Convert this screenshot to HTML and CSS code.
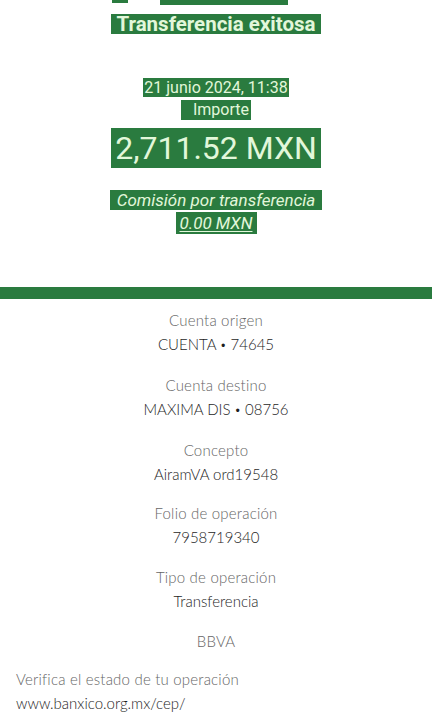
FILE: index.html
```html
<!DOCTYPE html>
<html lang="es">
<head>
<meta charset="utf-8">
<link rel="stylesheet" href="styles.css">
</head>
<body>
<div class="hero">
  <div class="stub"><span class="stub-a"></span><span class="stub-b"></span></div>
  <div class="row r-title"><span class="hl title">Transferencia exitosa</span></div>
  <div class="row r-date"><span class="hl date">21 junio 2024, 11:38</span></div>
  <div class="row r-imp"><span class="hl imp">Importe</span></div>
  <div class="row r-amt"><span class="hl amt">2,711.52 MXN</span></div>
  <div class="row r-com"><span class="hl com">Comisión por transferencia</span></div>
  <div class="row r-fee"><span class="hl fee">0.00 MXN</span></div>
</div>
<div class="bar"></div>
<div class="details">
  <div class="item"><div class="label">Cuenta origen</div><div class="value">CUENTA <span class="dot">•</span> 74645</div></div>
  <div class="item"><div class="label">Cuenta destino</div><div class="value">MAXIMA DIS <span class="dot">•</span> 08756</div></div>
  <div class="item"><div class="label">Concepto</div><div class="value">AiramVA ord19548</div></div>
  <div class="item"><div class="label">Folio de operación</div><div class="value">7958719340</div></div>
  <div class="item"><div class="label">Tipo de operación</div><div class="value">Transferencia</div></div>
  <div class="item"><div class="label">BBVA</div></div>
</div>
<div class="verify">
  <div class="label">Verifica el estado de tu operación</div>
  <div class="value">www.banxico.org.mx/cep/</div>
</div>
</body>
</html>
```
FILE: styles.css
```css
* { box-sizing: border-box; }
body {
  margin: 0;
  background: #ffffff;
  font-family: Lato, "Liberation Sans", sans-serif;
  width: 432px;
  height: 724px;
  overflow: hidden;
}
.hero {
  font-family: Roboto, "Liberation Sans", sans-serif;
  color: #e2f7da;
  height: 287px;
}
.stub {
  position: relative;
  height: 6px;
  margin-bottom: 8px;
}
.stub-a {
  position: absolute;
  left: 112px; top: 0;
  width: 16px; height: 3px;
  background: #2a7b3f;
}
.stub-b {
  position: absolute;
  left: 160px; top: 0;
  width: 128px; height: 5px;
  background: #2a7b3f;
}
.row {
  display: flex;
  justify-content: center;
}
.hl {
  display: inline-block;
  background: #2a7b3f;
  white-space: nowrap;
  text-align: center;
}
.title {
  font-size: 20.5px;
  font-weight: 700;
  line-height: 20px;
  width: 210px;
}
.r-date { margin-top: 44px; }
.date {
  font-size: 16px;
  line-height: 19px;
  width: 146px;
}
.r-imp { margin-top: 3px; }
.imp {
  font-size: 16px;
  line-height: 20px;
  width: 70px;
  padding-left: 10px;
}
.r-amt { margin-top: 8px; }
.amt {
  font-size: 32px;
  font-weight: 400;
  line-height: 40px;
  width: 210px;
}
.r-com { margin-top: 22px; }
.com {
  font-size: 17px;
  font-style: italic;
  line-height: 20px;
  width: 212px;
}
.r-fee { margin-top: 2px; }
.fee {
  font-size: 17px;
  font-style: italic;
  line-height: 22px;
  width: 81px;
  text-decoration: underline;
  text-underline-offset: 2px;
}
.bar {
  height: 12px;
  background: #2a7b3f;
}
.details {
  padding-top: 9px;
  display: flex;
  flex-direction: column;
  gap: 15.8px;
  text-align: center;
}
.label {
  font-size: 15px;
  font-weight: 300;
  letter-spacing: 0.2px;
  line-height: 24px;
  color: #666666;
}
.value {
  font-size: 15px;
  font-weight: 300;
  line-height: 24px;
  color: #1e1e1e;
}
.dot { font-size: 11px; vertical-align: 1px; }
.verify {
  margin-top: 14px;
  padding-left: 16px;
}
```
